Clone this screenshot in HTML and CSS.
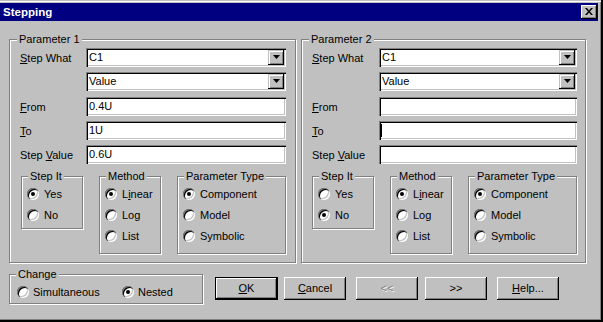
FILE: index.html
```html
<!DOCTYPE html>
<html>
<head>
<meta charset="utf-8">
<title>Stepping</title>
<link rel="stylesheet" href="styles.css">
</head>
<body>
<div class="window">
  <div class="titlebar">
    <span class="title">Stepping</span>
    <span class="close-btn"><svg width="8" height="7" viewBox="0 0 8 7"><path d="M0 0h2l2 2.4 2-2.4h2l-3 3.5 3 3.5h-2l-2-2.4-2 2.4h-2l3-3.5z" fill="#000"/></svg></span>
  </div>
  <div class="body">
    <div class="params">
      <div class="group param p1">
        <span class="legend">Parameter 1</span>
        <div class="frow r1"><span class="flabel"><u>S</u>tep What</span><div class="combo"><span class="val">C1</span><span class="drop"><svg width="7" height="4" viewBox="0 0 7 4"><path d="M0 0h7l-3.5 4z" fill="#000"/></svg></span></div></div>
        <div class="frow"><span class="flabel"></span><div class="combo"><span class="val">Value</span><span class="drop"><svg width="7" height="4" viewBox="0 0 7 4"><path d="M0 0h7l-3.5 4z" fill="#000"/></svg></span></div></div>
        <div class="frow r3"><span class="flabel"><u>F</u>rom</span><div class="edit">0.4U</div></div>
        <div class="frow"><span class="flabel"><u>T</u>o</span><div class="edit">1U</div></div>
        <div class="frow"><span class="flabel">Step <u>V</u>alue</span><div class="edit">0.6U</div></div>
        <div class="subgroups">
          <div class="group sub stepit">
            <span class="legend">Step It</span>
            <div class="rrow"><span class="radio on"></span>Yes</div>
            <div class="rrow"><span class="radio"></span>No</div>
          </div>
          <div class="group sub method">
            <span class="legend">Method</span>
            <div class="rrow"><span class="radio on"></span>L<u>i</u>near</div>
            <div class="rrow"><span class="radio"></span>Log</div>
            <div class="rrow"><span class="radio"></span>List</div>
          </div>
          <div class="group sub ptype">
            <span class="legend">Parameter Type</span>
            <div class="rrow"><span class="radio on"></span>Component</div>
            <div class="rrow"><span class="radio"></span>Model</div>
            <div class="rrow"><span class="radio"></span>Symbolic</div>
          </div>
        </div>
      </div>
      <div class="group param p2">
        <span class="legend">Parameter 2</span>
        <div class="frow r1"><span class="flabel"><u>S</u>tep What</span><div class="combo"><span class="val">C1</span><span class="drop"><svg width="7" height="4" viewBox="0 0 7 4"><path d="M0 0h7l-3.5 4z" fill="#000"/></svg></span></div></div>
        <div class="frow"><span class="flabel"></span><div class="combo"><span class="val">Value</span><span class="drop"><svg width="7" height="4" viewBox="0 0 7 4"><path d="M0 0h7l-3.5 4z" fill="#000"/></svg></span></div></div>
        <div class="frow r3"><span class="flabel"><u>F</u>rom</span><div class="edit"></div></div>
        <div class="frow"><span class="flabel"><u>T</u>o</span><div class="edit"><span class="caret"></span></div></div>
        <div class="frow"><span class="flabel">Step <u>V</u>alue</span><div class="edit"></div></div>
        <div class="subgroups">
          <div class="group sub stepit">
            <span class="legend">Step It</span>
            <div class="rrow"><span class="radio"></span>Yes</div>
            <div class="rrow"><span class="radio on"></span>No</div>
          </div>
          <div class="group sub method">
            <span class="legend">Method</span>
            <div class="rrow"><span class="radio on"></span>L<u>i</u>near</div>
            <div class="rrow"><span class="radio"></span>Log</div>
            <div class="rrow"><span class="radio"></span>List</div>
          </div>
          <div class="group sub ptype">
            <span class="legend">Parameter Type</span>
            <div class="rrow"><span class="radio on"></span>Component</div>
            <div class="rrow"><span class="radio"></span>Model</div>
            <div class="rrow"><span class="radio"></span>Symbolic</div>
          </div>
        </div>
      </div>
    </div>
    <div class="bottom">
      <div class="group change">
        <span class="legend">Change</span>
        <div class="crow">
          <div class="citem sim"><span class="radio"></span>Simultaneous</div>
          <div class="citem"><span class="radio on"></span>Nested</div>
        </div>
      </div>
      <div class="buttons">
        <div class="btn default"><span><u>O</u>K</span></div>
        <div class="btn b-cancel"><span><u>C</u>ancel</span></div>
        <div class="btn b-prev disabled"><span>&lt;&lt;</span></div>
        <div class="btn b-next"><span>&gt;&gt;</span></div>
        <div class="btn b-help"><span><u>H</u>elp...</span></div>
      </div>
    </div>
  </div>
</div>
</body>
</html>
```
FILE: styles.css
```css
* { box-sizing: border-box; }
html, body { margin: 0; padding: 0; background: #c0c0c0; }
body {
  font-family: "Liberation Sans", Arial, sans-serif;
  font-size: 11px;
  color: #000;
}
u { text-decoration: underline; text-underline-offset: 1px; }

.window {
  width: 603px;
  height: 322px;
  background: #c0c0c0;
  padding-top: 3px;
  border-right: 2px solid #000;
  border-bottom: 2px solid #000;
  box-shadow: inset 0 1px 0 #c0c0c0, inset 0 2px 0 #fff, inset -1px -1px 0 #808080;
  display: flex;
  flex-direction: column;
}

.titlebar {
  height: 18px;
  margin-right: 3px;
  background: #000080;
  display: flex;
  align-items: center;
  justify-content: space-between;
  padding-left: 3px;
  padding-right: 1px;
}
.title {
  color: #fff;
  font-weight: bold;
  font-size: 11.5px;
  line-height: 18px;
}
.close-btn {
  width: 16px;
  height: 14px;
  background: #c0c0c0;
  box-shadow: inset -1px -1px 0 #000, inset 1px 1px 0 #fff, inset -2px -2px 0 #808080;
  display: flex;
  align-items: flex-start;
  justify-content: flex-start;
  padding: 3px 0 0 4px;
}
.close-btn svg { display: block; }

.body {
  padding: 18px 0 0 9px;
  display: flex;
  flex-direction: column;
}

.params {
  display: flex;
  gap: 5px;
}

.group {
  border: 1px solid #808080;
  box-shadow: inset 1px 1px 0 #fff, 1px 1px 0 #fff;
  display: flex;
  flex-direction: column;
}
.legend {
  align-self: flex-start;
  margin: -7px 0 0 6px;
  padding: 0 2px;
  height: 13px;
  line-height: 13px;
  background: #c0c0c0;
  white-space: nowrap;
}
.param > .legend { margin-left: -3px; }
.sub > .legend { margin-left: 1px; }
.change > .legend { margin-left: -1px; }

.param {
  padding: 0 9px 8px 10px;
}
.p1 { width: 287px; }
.p2 { width: 285px; padding-right: 8px; }

.frow {
  display: flex;
  align-items: center;
  height: 19px;
  margin-top: 5px;
}
.frow.r1 { margin-top: 2px; }
.frow.r3 { margin-top: 6px; }
.flabel {
  width: 66px;
  flex: none;
  white-space: nowrap;
}
.p2 .flabel { width: 67px; }

.edit, .combo {
  flex: 1;
  height: 19px;
  background: #fff;
  box-shadow: inset 1px 1px 0 #808080, inset 2px 2px 0 #000, inset -1px -1px 0 #fff, inset -2px -2px 0 #c0c0c0;
  padding: 2px 2px 2px 3px;
  line-height: 15px;
  display: flex;
  align-items: center;
}
.combo .val { flex: 1; }
.drop {
  width: 16px;
  height: 15px;
  background: #c0c0c0;
  box-shadow: inset -1px -1px 0 #000, inset 1px 1px 0 #c0c0c0, inset 2px 2px 0 #fff, inset -2px -2px 0 #808080;
  display: flex;
  align-items: center;
  justify-content: center;
  padding-bottom: 1px;
}
.drop svg { display: block; }
.caret {
  width: 1px;
  height: 13px;
  background: #000;
  margin-left: -1px;
}

.subgroups {
  display: flex;
  margin-top: 12px;
  padding-left: 1px;
  gap: 16px;
}
.p2 .subgroups { padding-left: 0; }
.sub { padding-left: 5px; flex: none; }
.stepit { width: 62px; height: 53px; }
.method { width: 62px; height: 78px; }
.ptype { width: 109px; height: 78px; }

.rrow {
  height: 21px;
  display: flex;
  align-items: center;
  white-space: nowrap;
}
.radio {
  width: 12px;
  height: 12px;
  flex: none;
  border-radius: 50%;
  background: #fff;
  box-shadow: inset 1px 1px 0 #808080, inset 2px 2px 0 #000, inset -1px -1px 0 #fff, inset -2px -2px 0 #c0c0c0;
  margin-right: 5px;
  display: flex;
  align-items: center;
  justify-content: center;
}
.radio.on::after {
  content: "";
  width: 4px;
  height: 4px;
  border-radius: 50%;
  background: #000;
}

.bottom {
  display: flex;
  align-items: flex-start;
  margin-top: 11px;
}
.change {
  width: 194px;
  height: 30px;
  padding-left: 7px;
}
.crow {
  display: flex;
  height: 21px;
  align-items: center;
}
.citem {
  display: flex;
  align-items: center;
  white-space: nowrap;
}
.citem .radio { margin-right: 4px; }
.citem.sim { width: 105px; }

.buttons {
  display: flex;
  margin-top: 3px;
  margin-left: 12px;
}
.btn {
  width: 62px;
  height: 23px;
  background: #c0c0c0;
  box-shadow: inset -1px -1px 0 #000, inset 1px 1px 0 #fff, inset -2px -2px 0 #808080;
  display: flex;
  align-items: center;
  justify-content: center;
  line-height: 13px;
}
.btn.default {
  width: 63px;
  border: 1px solid #000;
}
.b-cancel { margin-left: 6px; }
.b-prev { margin-left: 10px; }
.b-next { margin-left: 7px; }
.b-help { margin-left: 10px; }
.btn.disabled span {
  color: #808080;
  text-shadow: 1px 1px 0 #fff;
}
```
